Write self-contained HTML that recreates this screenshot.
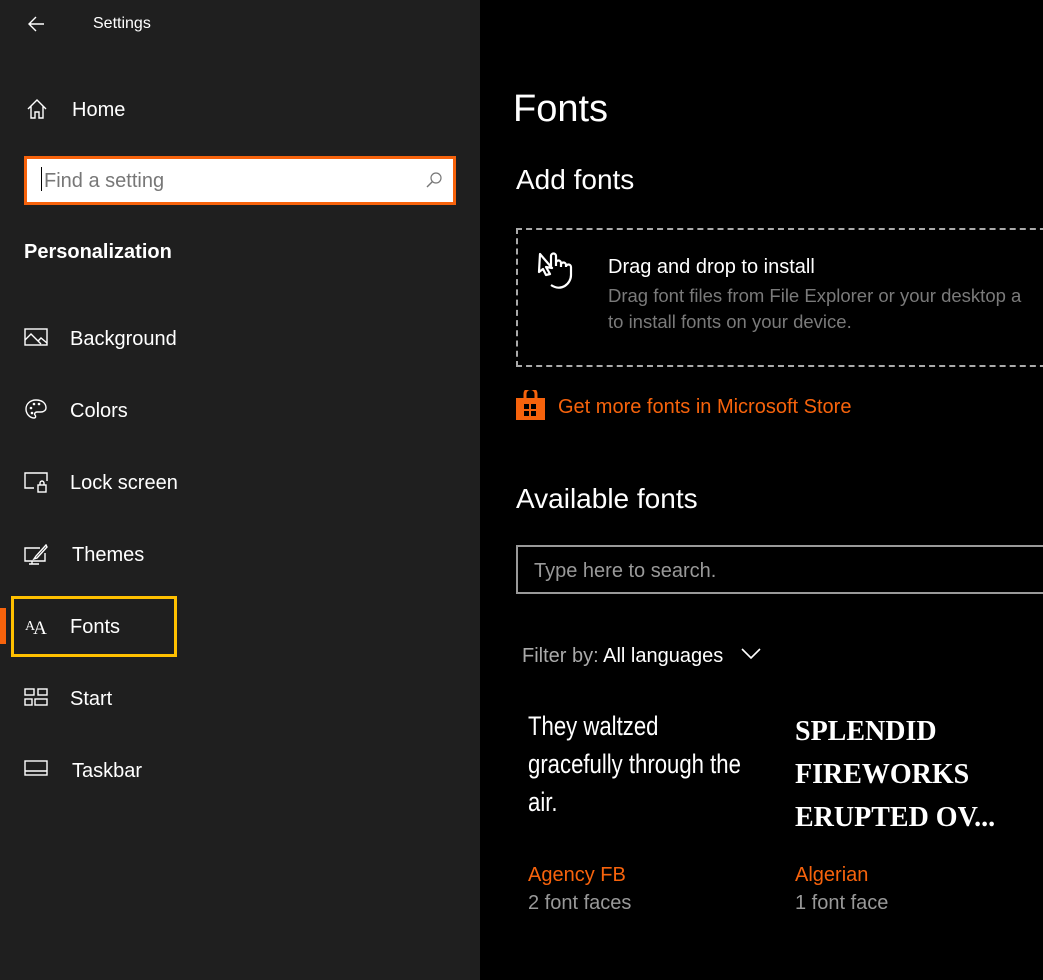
<!DOCTYPE html>
<html><head><style>
*{margin:0;padding:0;box-sizing:border-box}
body{width:1043px;height:980px;overflow:hidden;background:#000;font-family:"Liberation Sans",sans-serif;color:#fff;position:relative}
#side{position:absolute;left:0;top:0;width:480px;height:980px;background:#1f1f1f}
.a{position:absolute;white-space:nowrap}
.nav{position:absolute;left:70px;font-size:20px;color:#fff}
svg{position:absolute}
</style></head><body>
<div id="side">
<svg style="left:26px;top:14px" width="20" height="20" viewBox="0 0 20 20"><path d="M18 10H3M10 3L3 10l7 7" stroke="#fff" stroke-width="1.4" fill="none"/></svg>
<div class="a" style="left:93px;top:15px;font-size:16px">Settings</div>
<svg style="left:26px;top:98px" width="22" height="22" viewBox="0 0 22 22"><path d="M2 11L11 2l9 9M5 8v12h4v-6h4v6h4V8" stroke="#fff" stroke-width="1.4" fill="none"/></svg>
<div class="a" style="left:72px;top:99px;font-size:20px">Home</div>
<div class="a" style="left:24px;top:156px;width:432px;height:49px;border:3px solid #f7630c;background:#fff"></div>
<div class="a" style="left:41px;top:167px;width:1px;height:24px;background:#000"></div>
<div class="a" style="left:44px;top:170px;font-size:20px;color:#777">Find a setting</div>
<svg style="left:424px;top:170px" width="20" height="20" viewBox="0 0 20 20"><circle cx="12" cy="8" r="5" stroke="#777" fill="none" stroke-width="1.2"/><path d="M8.5 11.5L3 17" stroke="#777" stroke-width="1.4"/></svg>
<div class="a" style="left:24px;top:241px;font-size:20px;font-weight:bold">Personalization</div>

<svg style="left:24px;top:328px" width="24" height="20" viewBox="0 0 24 20"><rect x="1" y="1" width="22" height="16" stroke="#fff" fill="none" stroke-width="1.4"/><path d="M1 12l6-6 10 10M14 13l3-3 6 5" stroke="#fff" fill="none" stroke-width="1.4"/></svg>
<div class="nav" style="top:328px">Background</div>
<svg style="left:24px;top:398px" width="24" height="24" viewBox="0 0 24 24"><path d="M12 2C6 2 2 6 2 11c0 5 4 9 8 9 2 0 2-2 1-3s0-3 2-3h4c3 0 5-2 5-4 0-5-4-8-10-8z" stroke="#fff" fill="none" stroke-width="1.4"/><circle cx="7" cy="10" r="1.3" fill="#fff"/><circle cx="10" cy="6" r="1.3" fill="#fff"/><circle cx="15" cy="6" r="1.3" fill="#fff"/><circle cx="8" cy="15" r="1.3" fill="#fff"/></svg>
<div class="nav" style="top:400px">Colors</div>
<svg style="left:24px;top:472px" width="24" height="22" viewBox="0 0 24 22"><path d="M10 16H1V1h22v8" stroke="#fff" fill="none" stroke-width="1.4"/><rect x="14" y="13" width="8" height="7" fill="none" stroke="#fff" stroke-width="1.4"/><path d="M16 13v-2a2 2 0 014 0v2" stroke="#fff" fill="none" stroke-width="1.4"/></svg>
<div class="nav" style="top:472px">Lock screen</div>
<svg style="left:24px;top:544px" width="24" height="22" viewBox="0 0 24 22"><path d="M16 4H1v13h20v-8M8 17v3M5 20h10" stroke="#fff" fill="none" stroke-width="1.4"/><path d="M22 1L12 12l-2 3 3-1 10-11z" stroke="#fff" fill="none" stroke-width="1.4"/></svg>
<div class="nav" style="top:544px;left:72px">Themes</div>
<div class="a" style="left:0;top:608px;width:6px;height:36px;background:#f7630c"></div>
<div class="a" style="left:11px;top:596px;width:166px;height:61px;border:3px solid #ffc000"></div>
<div class="a" style="left:25px;top:614px;font-family:'Liberation Serif',serif;font-size:14px">A<span style="font-size:19px;position:relative;top:4px;left:-2px">A</span></div>
<div class="nav" style="top:616px">Fonts</div>
<svg style="left:24px;top:688px" width="24" height="20" viewBox="0 0 24 20"><rect x="1" y="1" width="9" height="6" stroke="#fff" fill="none" stroke-width="1.4"/><rect x="14" y="1" width="9" height="6" stroke="#fff" fill="none" stroke-width="1.4"/><rect x="1" y="11" width="7" height="6" stroke="#fff" fill="none" stroke-width="1.4"/><rect x="11" y="11" width="12" height="6" stroke="#fff" fill="none" stroke-width="1.4"/></svg>
<div class="nav" style="top:688px">Start</div>
<svg style="left:24px;top:760px" width="24" height="18" viewBox="0 0 24 18"><rect x="1" y="1" width="22" height="14" stroke="#fff" fill="none" stroke-width="1.4"/><path d="M1 11h22" stroke="#fff" stroke-width="1.4"/></svg>
<div class="nav" style="top:760px;left:72px">Taskbar</div>
</div>

<div class="a" style="left:513px;top:88px;font-size:38px">Fonts</div>
<div class="a" style="left:516px;top:164px;font-size:28px">Add fonts</div>
<div class="a" style="left:516px;top:228px;width:540px;height:139px;border:2px dashed #aaa"></div>
<svg style="left:537px;top:251px" width="50" height="45" viewBox="0 0 50 45"><path d="M3 3l12 14-6-1 4 7-4 1-3-6-4 3zM14 16V5a2.5 2.5 0 015 0v10M19 12a2.5 2.5 0 015 0v4M24 14a2.5 2.5 0 015 0v2M29 16a2.5 2.5 0 015 0v8c0 9-10 17-20 10" stroke="#fff" fill="none" stroke-width="2.2" stroke-linejoin="round"/></svg>
<div class="a" style="left:608px;top:256px;font-size:20px">Drag and drop to install</div>
<div class="a" style="left:608px;top:283px;font-size:18.5px;color:#7a7a7a;line-height:26px">Drag font files from File Explorer or your desktop a<br>to install fonts on your device.</div>
<svg style="left:516px;top:390px" width="29" height="30" viewBox="0 0 29 30"><path d="M9 8V4a5 5 0 0111 0v4" stroke="#f7630c" stroke-width="3" fill="none"/><rect x="0" y="8" width="29" height="22" fill="#f7630c"/><rect x="8" y="14" width="5" height="5" fill="#000"/><rect x="15" y="14" width="5" height="5" fill="#000"/><rect x="8" y="21" width="5" height="5" fill="#000"/><rect x="15" y="21" width="5" height="5" fill="#000"/></svg>
<div class="a" style="left:558px;top:396px;font-size:20px;color:#f7630c">Get more fonts in Microsoft Store</div>
<div class="a" style="left:516px;top:483px;font-size:28px">Available fonts</div>
<div class="a" style="left:516px;top:545px;width:540px;height:49px;border:2px solid #999"></div>
<div class="a" style="left:534px;top:560px;font-size:20px;color:#999">Type here to search.</div>
<div class="a" style="left:522px;top:645px;font-size:20px;color:#aaa">Filter by: <span style="color:#fff">All languages</span></div>
<svg style="left:740px;top:646px" width="22" height="14" viewBox="0 0 22 14"><path d="M2 3l9 9 9-9" stroke="#fff" fill="none" stroke-width="1.6"/></svg>
<div class="a" style="left:528px;top:707px;font-size:27px;line-height:38px;font-family:'Liberation Sans Narrow','Liberation Sans',sans-serif;transform:scaleX(.82);transform-origin:left">They waltzed<br>gracefully through the<br>air.</div>
<div class="a" style="left:795px;top:710px;font-size:28px;line-height:43px;font-family:'Liberation Serif',serif;font-weight:bold">SPLENDID<br>FIREWORKS<br>ERUPTED OV...</div>
<div class="a" style="left:528px;top:864px;font-size:20px;color:#f7630c">Agency FB</div>
<div class="a" style="left:528px;top:892px;font-size:20px;color:#999">2 font faces</div>
<div class="a" style="left:795px;top:864px;font-size:20px;color:#f7630c">Algerian</div>
<div class="a" style="left:795px;top:892px;font-size:20px;color:#999">1 font face</div>
</body></html>
